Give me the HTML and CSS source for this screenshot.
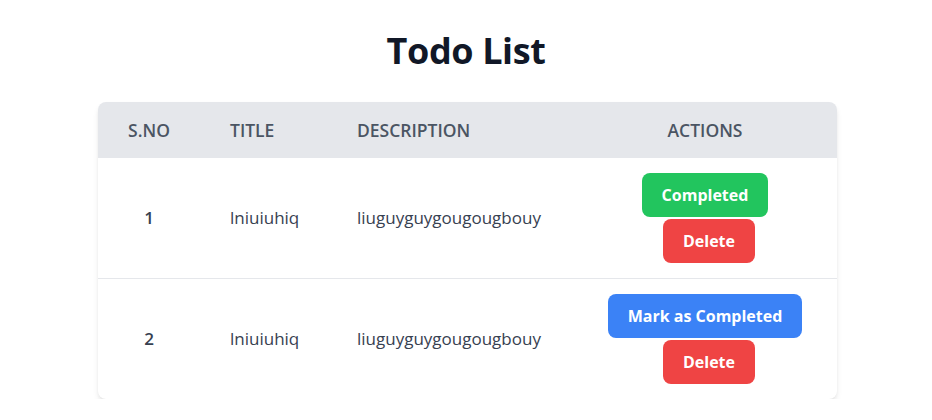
FILE: index.html
```html
<!DOCTYPE html>
<html lang="en">
<head>
<meta charset="utf-8">
<title>Todo List</title>
<link rel="stylesheet" href="styles.css">
</head>
<body>
<main class="page">
  <h1 class="title">Todo List</h1>
  <div class="table-wrap">
    <table class="todo-table">
      <colgroup>
        <col class="c-sno"><col class="c-title"><col class="c-desc"><col class="c-actions">
      </colgroup>
      <thead>
        <tr>
          <th class="center sno">S.No</th>
          <th>Title</th>
          <th>Description</th>
          <th class="center">Actions</th>
        </tr>
      </thead>
      <tbody>
        <tr>
          <td class="center sno num">1</td>
          <td>lniuiuhiq</td>
          <td>liuguyguygougougbouy</td>
          <td class="center">
            <div class="actions">
              <button class="btn btn-green">Completed</button>
              <button class="btn btn-red btn-delete">Delete</button>
            </div>
          </td>
        </tr>
        <tr>
          <td class="center sno num">2</td>
          <td>lniuiuhiq</td>
          <td>liuguyguygougougbouy</td>
          <td class="center">
            <div class="actions">
              <button class="btn btn-blue">Mark as Completed</button>
              <button class="btn btn-red btn-delete">Delete</button>
            </div>
          </td>
        </tr>
      </tbody>
    </table>
  </div>
</main>
</body>
</html>
```
FILE: styles.css
```css
* { box-sizing: border-box; }
html, body { margin: 0; padding: 0; background: #ffffff; }
body {
  font-family: "Open Sans", "Noto Sans", "Liberation Sans", sans-serif;
  color: #374151;
}
.page {
  padding-top: 31px;
}
.title {
  margin: 0 0 31px 0;
  text-align: center;
  font-size: 36px;
  line-height: 40px;
  font-weight: 700;
  letter-spacing: -0.4px;
  color: #111827;
}
.table-wrap {
  width: 739px;
  margin-left: 98px;
  border-radius: 8px;
  overflow: hidden;
  box-shadow: 0 4px 6px -1px rgba(0,0,0,0.1), 0 2px 4px -2px rgba(0,0,0,0.1);
}
.todo-table {
  width: 100%;
  border-collapse: collapse;
  table-layout: fixed;
}
.c-sno { width: 108px; }
.c-title { width: 127px; }
.c-desc { width: 240px; }
.c-actions { width: 264px; }
thead tr { background: #e5e7eb; }
th {
  padding: 16px 24px;
  text-align: left;
  text-transform: uppercase;
  font-size: 17.5px;
  line-height: 24px;
  font-weight: 600;
  color: #4b5563;
}
td {
  padding: 15px 24px;
  font-size: 17px;
  line-height: 24px;
  color: #374151;
  vertical-align: middle;
}
th.sno, td.sno { padding-left: 21px; padding-right: 27px; }
tbody tr + tr { border-top: 1px solid #e5e7eb; }
.center { text-align: center; }
.num { font-weight: 600; }
.actions {
  display: flex;
  flex-direction: column;
  align-items: center;
  gap: 2px;
}
.btn {
  font-family: inherit;
  border: none;
  border-radius: 8px;
  padding: 10px 20px;
  font-size: 16px;
  line-height: 24px;
  font-weight: 700;
  color: #ffffff;
  cursor: pointer;
}
.btn-delete { margin-left: 8px; }
.btn-green { background: #22c55e; }
.btn-red { background: #ef4444; }
.btn-blue { background: #3b82f6; }
```
